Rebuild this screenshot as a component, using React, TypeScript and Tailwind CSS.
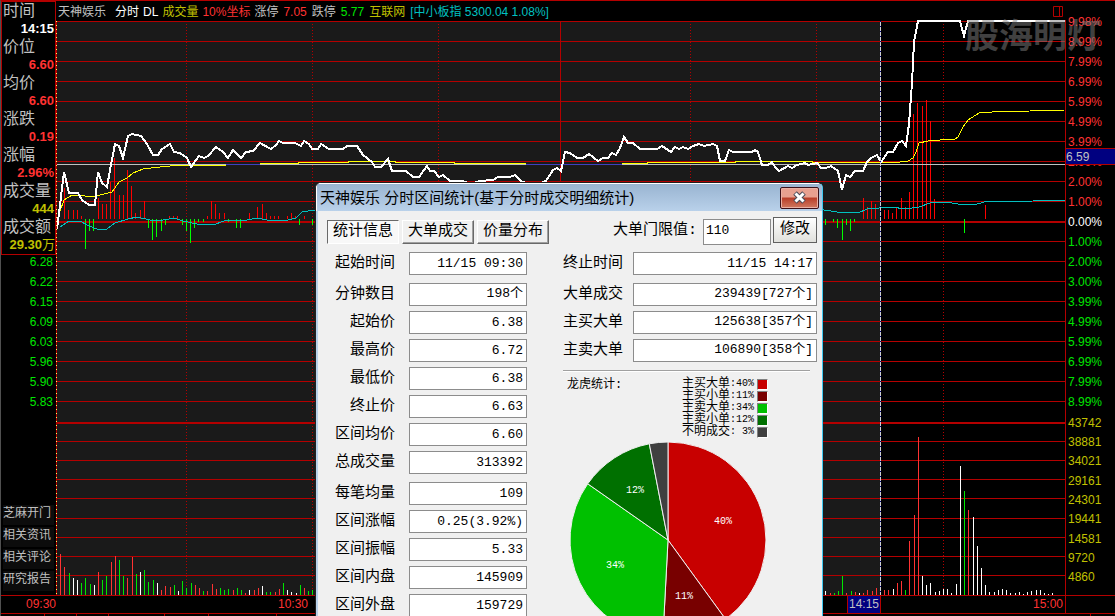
import { useId } from "react";

const priceLine =
  "57,229 59,213 64,172 69,193 78,193 82,200 89,205 95,205 98,172 102,183 107,187 110,170 115,144 119,146 123,158 128,136 132,134 141,136 147,144 153,155 158,155 162,149 170,144 174,152 180,153 187,158 191,167 199,156 204,158 208,156 216,147 223,152 228,158 233,150 238,155 241,158 246,152 253,151 260,143 271,149 276,145 279,141 283,143 295,143 301,146 304,141 309,144 312,149 318,149 321,144 329,149 343,149 347,146 357,146 363,155 372,162 375,167 381,167 388,159 392,171 406,171 413,177 419,177 427,166 430,171 434,171 439,177 443,175 450,181 463,181 470,184 480,181 493,180 498,177 510,177 515,175 521,181 532,186 546,181 553,170 557,168 561,171 565,152 570,153 577,158 583,158 589,154 598,161 603,158 608,158 612,153 616,155 620,148 624,137 628,143 633,143 640,149 657,149 662,146 671,152 675,147 679,149 683,147 688,149 693,146 699,144 704,146 713,144 717,146 720,161 725,161 729,150 733,152 752,152 755,150 758,152 762,165 768,165 772,162 775,167 779,171 788,166 792,168 797,165 805,163 808,165 817,163 821,168 826,168 831,166 838,171 842,190 846,175 850,177 855,171 863,171 867,162 871,158 877,155 881,162 888,152 893,152 898,143 902,141 906,146 909,124 912,83 914,42 918,21 960,21 964,36 968,21 1065,21";

const avgLineMorning =
  "60,211 64,200 72,195 78,195 92,197 112,192 119,182 127,178 133,173 143,169 160,167 180,165 226,165";
const avgLineMidday =
  "260,163 298,163 298,162 348,162 348,161 395,161 395,162 454,162 454,163 526,163";
const avgLineAfternoon =
  "622,163 647,163 647,162 735,162 735,161 812,161 812,162 900,162 908,161 913,158 916,152 919,143 928,141 940,140 955,139 958,137 963,127 968,120 979,113 992,112 1030,111 1065,110";

const indexLine =
  "60,227 69,221 80,221 89,226 97,229 107,229 115,223 128,219 137,217 150,220 158,221 174,218 183,221 197,224 213,225 227,220 247,220 257,218 267,220 288,220 296,218 302,212 315,210 600,205 824,210 837,212 858,213 867,209 892,207 905,209 919,207 933,202 952,203 964,205 977,204 988,201 995,202 1033,201 1065,200";

const gridRows = [
  21, 41, 61, 81, 101, 121, 141, 161, 181, 201, 241, 261, 281, 301, 321, 341,
  361, 381, 401, 441, 460, 479, 498, 518, 537, 556, 575,
];
const dottedCols = [186, 312, 438, 690, 816, 943];

// [x, height]: positive rises above the zero line, negative hangs below it
const momentum: [number, number][] = [
  [64, 31], [68, 9], [73, 9], [77, 9], [81, 3], [98, 21], [102, 15], [106, 15],
  [110, 37], [114, 61], [119, 24], [123, 24], [127, 49], [131, 33], [135, 6],
  [140, 9], [144, 18], [169, 3], [173, 3], [177, 3], [207, 3], [211, 18],
  [215, 15], [219, 6], [224, 6], [249, 6], [257, 12], [262, 15], [266, 6],
  [270, 3], [274, 3], [278, 3], [287, 3], [291, 6], [295, 3], [304, 3],
  [85, -30], [89, -12], [93, -12], [148, -9], [152, -21], [156, -18],
  [161, -12], [165, -6], [182, -6], [186, -12], [190, -24], [194, -9],
  [198, -3], [203, -3], [228, -3], [236, -9], [240, -9], [299, -6], [312, -6],
  [863, 21], [867, 12], [871, 18], [875, 15], [884, 9], [888, 9], [892, 6],
  [896, 12], [901, 21], [905, 12], [909, 27], [913, 105], [917, 116],
  [922, 113], [926, 119], [930, 98], [934, 20], [985, 14], [825, -6],
  [833, -3], [837, -9], [842, -21], [846, -6], [850, -12], [854, -3],
  [964, -14],
];

type Tone = "r" | "g" | "w";
const toneColor = { r: "#ff3232", g: "#00e600", w: "#ffffff" };

const volume: [number, number, Tone][] = [
  [60, 41, "r"], [64, 28, "r"], [69, 22, "g"], [73, 17, "w"], [77, 15, "w"],
  [81, 12, "g"], [85, 17, "g"], [90, 11, "g"], [94, 10, "w"], [98, 23, "r"],
  [102, 15, "g"], [106, 19, "g"], [111, 33, "r"], [115, 39, "r"],
  [119, 35, "g"], [123, 19, "g"], [127, 17, "r"], [132, 38, "r"],
  [136, 21, "g"], [140, 23, "w"], [144, 25, "g"], [148, 13, "g"],
  [153, 15, "g"], [157, 12, "w"], [161, 5, "r"], [165, 9, "r"], [170, 8, "r"],
  [174, 10, "g"], [178, 4, "w"], [182, 14, "g"], [186, 7, "g"], [191, 12, "g"],
  [195, 10, "r"], [199, 7, "r"], [203, 4, "g"], [207, 4, "r"], [212, 11, "r"],
  [216, 6, "r"], [220, 7, "g"], [224, 5, "g"], [228, 6, "g"], [233, 5, "r"],
  [237, 7, "g"], [241, 5, "g"], [245, 2, "r"], [249, 5, "w"], [254, 5, "r"],
  [258, 7, "r"], [262, 9, "w"], [266, 3, "g"], [270, 3, "g"], [275, 3, "r"],
  [279, 6, "r"], [283, 12, "g"], [287, 5, "w"], [291, 3, "w"], [296, 2, "w"],
  [300, 10, "g"], [304, 7, "r"], [308, 4, "g"], [312, 5, "g"], [825, 4, "w"],
  [830, 2, "r"], [834, 2, "g"], [838, 4, "g"], [842, 19, "g"], [846, 2, "r"],
  [851, 4, "g"], [855, 3, "r"], [859, 2, "w"], [863, 2, "r"], [867, 5, "r"],
  [872, 4, "r"], [876, 7, "r"], [884, 5, "r"], [888, 5, "r"], [893, 6, "w"],
  [897, 12, "r"], [901, 14, "r"], [905, 5, "g"], [909, 54, "r"],
  [914, 80, "r"], [918, 158, "r"], [922, 19, "w"], [926, 10, "w"],
  [930, 12, "w"], [935, 3, "w"], [939, 4, "w"], [943, 6, "w"], [947, 6, "w"],
  [951, 2, "w"], [956, 11, "w"], [960, 129, "w"], [964, 104, "g"],
  [968, 85, "r"], [973, 78, "w"], [977, 49, "w"], [981, 27, "w"],
  [985, 10, "w"], [989, 3, "w"], [994, 3, "w"], [998, 5, "w"], [1002, 6, "w"],
  [1006, 5, "w"], [1010, 2, "w"], [1015, 2, "w"], [1019, 3, "w"],
  [1023, 1, "w"], [1027, 3, "w"], [1031, 4, "w"], [1036, 5, "w"],
  [1040, 5, "w"], [1044, 2, "w"], [1048, 1, "w"], [1052, 2, "w"],
];

const quoteRows = [
  { label: "时间", value: "14:15", color: "text-white" },
  { label: "价位", value: "6.60", color: "text-[#ff3232]" },
  { label: "均价", value: "6.60", color: "text-[#ff3232]" },
  { label: "涨跌", value: "0.19", color: "text-[#ff3232]" },
  { label: "涨幅", value: "2.96%", color: "text-[#ff3232]" },
  { label: "成交量", value: "444", color: "text-[#c0c000]" },
  { label: "成交额", value: "29.30", unit: "万", color: "text-[#c0c000]" },
];

const lowerPrices = ["6.28", "6.22", "6.15", "6.09", "6.03", "5.96", "5.90", "5.83"];
const sideLinks = ["芝麻开门", "相关资讯", "相关评论", "研究报告"];

const upPercents = ["9.98%", "8.99%", "7.99%", "6.99%", "5.99%", "4.99%", "3.99%", "2.99%", "2.00%", "1.00%"];
const downPercents = ["1.00%", "2.00%", "3.00%", "3.99%", "4.99%", "5.99%", "6.99%", "7.99%", "8.99%"];
const volumeScale = ["43742", "38881", "34021", "29161", "24301", "19441", "14581", "9720", "4860"];

const leftGroups = [
  [["起始时间", "11/15 09:30"]],
  [
    ["分钟数目", "198个"],
    ["起始价", "6.38"],
    ["最高价", "6.72"],
    ["最低价", "6.38"],
    ["终止价", "6.63"],
    ["区间均价", "6.60"],
    ["总成交量", "313392"],
  ],
  [
    ["每笔均量", "109"],
    ["区间涨幅", "0.25(3.92%)"],
    ["区间振幅", "5.33"],
    ["区间内盘", "145909"],
    ["区间外盘", "159729"],
  ],
];

const rightGroups = [
  [["终止时间", "11/15 14:17"]],
  [
    ["大单成交", "239439[727个]"],
    ["主买大单", "125638[357个]"],
    ["主卖大单", "106890[358个]"],
  ],
];

const legend = [
  { name: "主买大单", share: "40%", swatch: "bg-[#c80000]" },
  { name: "主买小单", share: "11%", swatch: "bg-[#780000]" },
  { name: "主卖大单", share: "34%", swatch: "bg-[#00c000]" },
  { name: "主卖小单", share: "12%", swatch: "bg-[#007000]" },
  { name: "不明成交", share: "3%", swatch: "bg-[#404040]" },
];

const slices = [
  { from: 0, to: 144, fill: "#c80000" },
  { from: 144, to: 183, fill: "#780000" },
  { from: 183, to: 305, fill: "#00c000" },
  { from: 305, to: 349, fill: "#007000" },
  { from: 349, to: 360, fill: "#404040" },
];

function slicePath(from: number, to: number) {
  const point = (deg: number) => {
    const a = (deg * Math.PI) / 180;
    return `${98 + 98 * Math.sin(a)} ${98 - 98 * Math.cos(a)}`;
  };
  return `M98 98 L${point(from)} A98 98 0 0 1 ${point(to)} Z`;
}

function TopBar() {
  return (
    <header className="flex h-[19px] shrink-0 items-center gap-[5px] px-0.5 pt-0.5 text-xs whitespace-nowrap text-[#c0c0c0]">
      <h1 className="mr-1">天神娱乐</h1>
      <div className="flex gap-1">
        <span className="text-white">分时</span>
        <span className="text-white">DL</span>
        <span className="text-[#c0c000]">成交量</span>
        <span className="text-[#ff3232]">10%坐标</span>
        <span>涨停</span>
      </div>
      <span className="text-[#ff3232]">7.05</span>
      <span>跌停</span>
      <span className="text-[#00e600]">5.77</span>
      <span className="text-[#c0c000]">互联网</span>
      <span className="text-[#00c0c0]">[中小板指 5300.04 1.08%]</span>
      <button aria-label="分栏" className="ml-auto">
        <svg viewBox="0 0 11 11" className="size-[11px]" fill="none" stroke="#b40000">
          <path d="M.5 .5h9v10h-9zM6.5 .5v10" />
        </svg>
      </button>
    </header>
  );
}

function Chart() {
  return (
    <svg
      viewBox="56 20 1010 575"
      preserveAspectRatio="none"
      className="min-h-0 w-full flex-1"
      shapeRendering="crispEdges"
      fill="none"
    >
      <rect x="56" y="21" width="825" height="574" fill="#1a1a1a" />
      {gridRows.map((y) => (
        <rect key={y} x="56" y={y} width="1010" height="1" fill="#b40000" />
      ))}
      <rect x="56" y="221" width="1010" height="2" fill="#b40000" />
      <rect x="56" y="422" width="1010" height="2" fill="#b40000" />
      {dottedCols.map((x) => (
        <path key={x} d={`M${x + 0.5} 24V595`} stroke="#b40000" strokeDasharray="1 2" />
      ))}
      <rect x="560" y="21" width="1" height="574" fill="#b40000" />
      <rect x="1065" y="20" width="1" height="575" fill="#b40000" />
      {momentum.map(([x, h]) => (
        <rect
          key={x}
          x={x}
          y={h > 0 ? 219 - h : 219}
          width="1"
          height={Math.abs(h)}
          fill={h > 0 ? "#ff0000" : "#00ff00"}
        />
      ))}
      {volume.map(([x, h, tone]) => (
        <rect key={x} x={x} y={595 - h} width="1" height={h} fill={toneColor[tone]} />
      ))}
      <polyline points={indexLine} stroke="#00c0c0" />
      <path d="M226 164.500H260M526 164.500H622" stroke="#4040c0" />
      <rect x="56" y="164" width="170" height="1" fill="#c0c0c0" />
      <rect x="260" y="164" width="266" height="1" fill="#c0c0c0" />
      <rect x="622" y="164" width="443" height="1" fill="#c0c0c0" />
      <polyline points={avgLineMorning} stroke="#ffff00" />
      <polyline points={avgLineMidday} stroke="#ffff00" />
      <polyline points={avgLineAfternoon} stroke="#ffff00" />
      <polyline points={priceLine} stroke="#ffffff" strokeWidth="2" />
      <path d="M56.500 21V595" stroke="#b40000" />
      <path d="M56.500 21V595" stroke="#ffff60" strokeDasharray="1 3" />
      <path d="M880.500 21V595" stroke="#000080" />
      <path d="M880.500 22V595" stroke="#d0d0d0" strokeDasharray="4 1" />
    </svg>
  );
}

function LeftPanel() {
  return (
    <aside className="flex w-[55px] shrink-0 flex-col">
      <dl className="border border-[#b40000] pl-px">
        {quoteRows.map((row) => (
          <div key={row.label}>
            <dt className="text-base leading-[18px] text-[#c0c0c0]">{row.label}</dt>
            <dd
              className={`text-right text-[13px] leading-[18px] font-bold ${row.color} ${row.unit ? "" : "pr-px"}`}
            >
              {row.value}
              {row.unit && <span className="font-normal">{row.unit}</span>}
            </dd>
          </div>
        ))}
      </dl>
      <ul className="-mt-px flex flex-col gap-1 pr-[3px] text-right text-xs leading-4 text-[#00e600]">
        {lowerPrices.map((p) => (
          <li key={p}>{p}</li>
        ))}
      </ul>
      <nav className="mt-auto mb-1 flex flex-col gap-0.5 px-0.5 text-xs leading-4 text-[#c0c0c0]">
        {sideLinks.map((name) => (
          <a key={name} href="#" className="h-5 bg-[#0c0c0c] whitespace-nowrap">
            {name}
          </a>
        ))}
      </nav>
    </aside>
  );
}

function RightScale() {
  return (
    <aside className="relative flex w-[49px] shrink-0 flex-col pt-[11px] pl-0.5 text-xs leading-none">
      <ul className="flex flex-[400] flex-col">
        {upPercents.map((p) => (
          <li key={p} className="flex flex-1 items-center text-[#ff3232]">{p}</li>
        ))}
        <li className="flex flex-1 items-center text-white">0.00%</li>
        {downPercents.map((p) => (
          <li key={p} className="flex flex-1 items-center text-[#00e600]">{p}</li>
        ))}
      </ul>
      <ul className="flex flex-[174] flex-col pt-px pb-2 text-[#c0c000]">
        {volumeScale.map((v) => (
          <li key={v} className="flex flex-1 items-center">{v}</li>
        ))}
      </ul>
      <div className="absolute inset-x-0 top-[147px] h-[17px] border-y border-[#b40000] bg-[#000080] leading-4 text-[#c0c0c0]">
        6.59
      </div>
    </aside>
  );
}

function TimeBar() {
  return (
    <footer className="shrink-0 text-xs leading-4 text-[#ff3232]">
      <div className="flex h-[18px] border-t border-[#b40000]">
        <span className="w-[55px] shrink-0 text-right">09:30</span>
        <div className="flex flex-1 border-r border-[#b40000] text-right">
          <span className="flex-[252]">10:30</span>
          <span className="flex flex-[573] justify-end">
            <span className="border-x border-[#b40000] bg-[#000080] px-px text-[#c0c0c0]">
              14:15
            </span>
          </span>
          <span className="flex-[182] pr-0.5">15:00</span>
        </div>
        <span className="w-[49px] shrink-0" />
      </div>
      <div className="flex h-[3px] border-t border-[#b40000]">
        <span className="w-11 border-r border-[#b40000]" />
        <span className="w-8 border-r border-[#b40000]" />
        <span className="w-8 border-r border-[#b40000]" />
        <span className="w-14 border-r border-[#b40000]" />
        <span className="w-11 border-r border-[#b40000]" />
        <span className="w-17 border-r border-[#b40000]" />
        <span className="mr-6 flex-1 border-r border-[#b40000]" />
      </div>
    </footer>
  );
}

interface FieldGroupsProps {
  groups: string[][][];
  inputClass: string;
}

function FieldGroups({ groups, inputClass }: FieldGroupsProps) {
  const id = useId();
  return (
    <div className="flex flex-col gap-2">
      {groups.map((group) => (
        <div key={group[0][0]} className="flex flex-col gap-[5px]">
          {group.map(([label, value]) => (
            <div key={label} className="flex items-center gap-2.5">
              <label
                htmlFor={id + label}
                className="w-[60px] shrink-0 text-right text-[15px] leading-[23px] whitespace-nowrap"
              >
                {label}
              </label>
              <input
                id={id + label}
                readOnly
                defaultValue={value}
                className={`h-[23px] border border-[#8c8c8c] bg-white pr-[3px] text-right text-[13px] outline-none ${inputClass} ${value.includes("个") ? "pb-1.5" : ""}`}
              />
            </div>
          ))}
        </div>
      ))}
    </div>
  );
}

function PieChart() {
  return (
    <svg viewBox="0 0 196 196" className="ml-[7px] size-[196px] max-w-none" aria-label="龙虎统计">
      {slices.map((s) => (
        <path key={s.fill} d={slicePath(s.from, s.to)} fill={s.fill} stroke="#f0f0f0" />
      ))}
      <g fill="#ffffff" fontSize="10" textAnchor="middle">
        <text x="153" y="82">40%</text>
        <text x="114" y="157">11%</text>
        <text x="45" y="126">34%</text>
        <text x="65" y="51">12%</text>
      </g>
    </svg>
  );
}

function StatsDialog() {
  const tab = "h-6 w-[72px] border text-[15px] leading-[22px] whitespace-nowrap";
  const raised = "border-t-white border-l-white border-r-[#696969] border-b-[#696969] shadow-[inset_-1px_-1px_0_#a0a0a0]";
  return (
    <div
      role="dialog"
      aria-label="分时区间统计"
      className="absolute top-[181px] bottom-0 left-[314px] w-[508px] overflow-hidden rounded-t-md border border-b-0 border-[#202020] border-r-[#40c8f0] bg-[#f0f0f0] font-['Liberation_Mono','Noto_Sans_CJK_SC',monospace] text-black"
    >
      <div className="flex h-7 items-center justify-between border-t border-l border-white bg-linear-to-b from-[#99b4d1] to-[#b9d1ea] pr-[3px] pl-[3px]">
        <h2 className="font-['Liberation_Sans','Noto_Sans_CJK_SC',sans-serif] text-[15px] leading-7 whitespace-nowrap">
          天神娱乐 分时区间统计(基于分时成交明细统计)
        </h2>
        <button
          aria-label="关闭"
          className="flex h-[22px] w-[39px] items-center justify-center rounded-xs border border-[#3c1018] bg-linear-to-b from-[#e8a090] from-45% via-[#b83c28] via-50% to-[#d07860] shadow-[inset_0_0_0_1px_#eab0a4]"
        >
          <svg viewBox="0 0 15 13" className="h-[13px] w-[15px]" fill="none">
            <path d="M3 2l9 9M12 2l-9 9" stroke="#4a4a58" strokeWidth="5" />
            <path d="M3.500 2.500l8 8M11.500 2.500l-8 8" stroke="#ffffff" strokeWidth="3" />
          </svg>
        </button>
      </div>
      <div className="flex h-full gap-9 border-l-2 border-[#b9d1ea] pl-[9px]">
        <div className="shrink-0">
          <div role="tablist" className="flex h-[41px] gap-[3px] pt-[9px]">
            <button
              role="tab"
              aria-selected="true"
              className={`${tab} border-t-[#696969] border-l-[#696969] border-r-white border-b-white bg-[#f8f8f8]`}
            >
              统计信息
            </button>
            <button role="tab" aria-selected="false" className={`${tab} ${raised}`}>
              大单成交
            </button>
            <button role="tab" aria-selected="false" className={`${tab} ${raised}`}>
              价量分布
            </button>
          </div>
          <div className="pl-2">
            <FieldGroups groups={leftGroups} inputClass="ml-1 w-[118px]" />
          </div>
        </div>
        <div className="-ml-[22px] w-[254px] shrink-0">
          <div className="flex h-[41px] items-start justify-end gap-0.5 pt-1.5">
            <label htmlFor="threshold" className="mr-1 text-[15px] leading-7 whitespace-nowrap">
              大单门限值:
            </label>
            <input
              id="threshold"
              defaultValue="110"
              className="mt-0.5 h-[26px] w-[68px] border border-[#8c8c8c] bg-white pb-1 pl-0.5 text-[13px] outline-none"
            />
            <button className="h-[26px] w-11 border border-[#606060] bg-linear-to-b from-white to-[#e0e0dc] text-[15px] leading-6">
              修改
            </button>
          </div>
          <FieldGroups groups={rightGroups} inputClass="w-[184px]" />
          <hr className="mt-2 mr-[7px] border-t border-b border-t-[#a0a0a0] border-b-white" />
          <div className="flex items-start justify-between pt-1.5 pr-[49px] pl-1 text-[10px]">
            <span className="text-xs leading-[14px]">龙虎统计:</span>
            <ul>
              {legend.map((item) => (
                <li key={item.name} className="flex h-3 items-center leading-3">
                  <span className="text-xs leading-3">{item.name}</span>
                  <span className="w-6">:{item.share.padStart(3, "\u00a0")}</span>
                  <span className={`ml-[3px] size-[11px] border border-t-[#808080] border-l-[#808080] border-r-white border-b-white ${item.swatch}`} />
                </li>
              ))}
            </ul>
          </div>
          <div className="pt-1">
            <PieChart />
          </div>
        </div>
      </div>
    </div>
  );
}

export default function App() {
  return (
    <main className="relative flex h-screen flex-col overflow-hidden border-t border-l border-t-[#b40000] border-l-[#505050] bg-black font-['Liberation_Sans','Noto_Sans_CJK_SC',sans-serif]">
      <div className="flex min-h-0 flex-1">
        <LeftPanel />
        <section className="flex min-w-0 flex-1 flex-col">
          <TopBar />
          <Chart />
        </section>
        <RightScale />
      </div>
      <TimeBar />
      <StatsDialog />
      <div className="pointer-events-none absolute top-[13px] right-[14px] text-[34px] leading-[44px] font-bold text-[#808080]/50">
        股海明灯
      </div>
    </main>
  );
}
